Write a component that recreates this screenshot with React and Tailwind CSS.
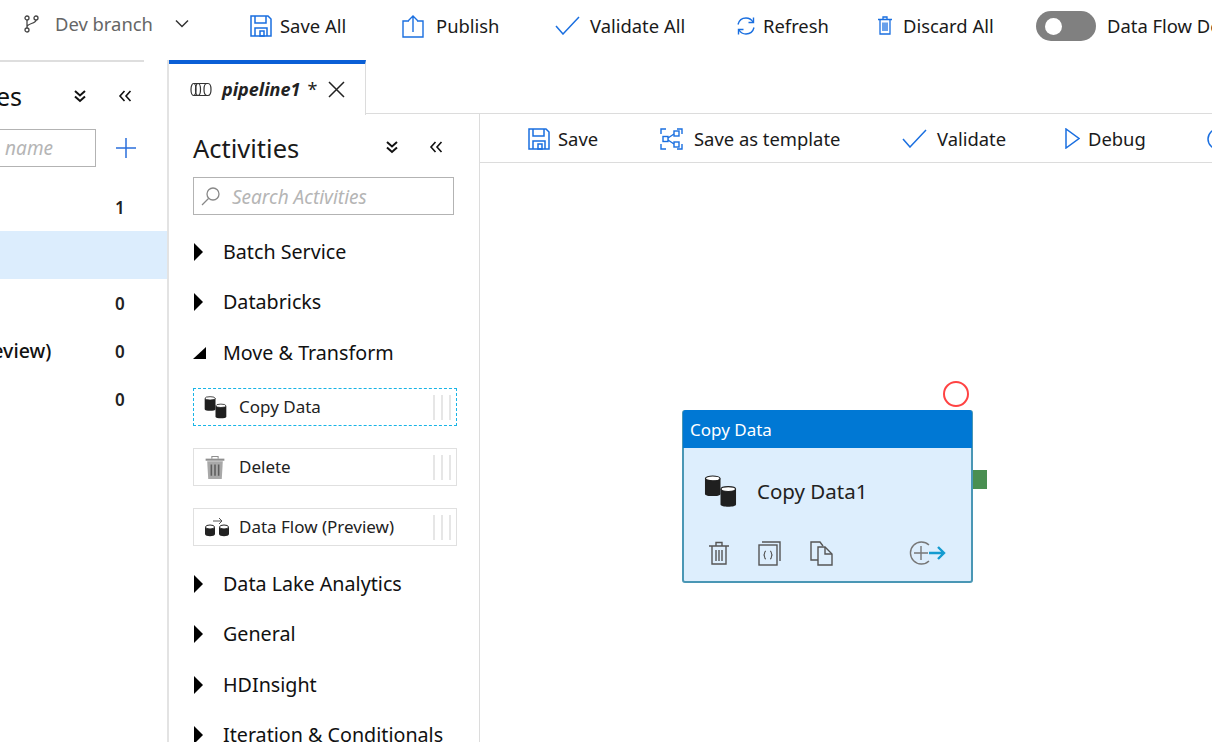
import React from "react";

const blue = "#1a6fe0";

const SaveIcon = ({ size = 22 }) => (
  <svg className="shrink-0" width={size} height={size} viewBox="0 0 22 22" fill="none" stroke={blue} strokeWidth="1.5">
    <path d="M1 1h17l3 3v17H1z" />
    <path d="M5 1v7h11V1M5 21v-8h12v8M10 16v5h4v-5z" />
  </svg>
);
const PublishIcon = () => (
  <svg className="shrink-0" width="22" height="24" viewBox="0 0 22 24" fill="none" stroke={blue} strokeWidth="1.4">
    <path d="M7 7H1v16h20V7h-6M11 18V2M6.500 6.500 11 2l4.500 4.500" />
  </svg>
);
const CheckIcon = ({ w = 25, h = 19 }) => (
  <svg className="shrink-0" width={w} height={h} viewBox="0 0 25 19" fill="none" stroke={blue} strokeWidth="1.5">
    <path d="M1 10l7 8L24 1" />
  </svg>
);
const RefreshIcon = () => (
  <svg className="shrink-0" width="20" height="20" viewBox="0 0 20 20" fill="none" stroke={blue} strokeWidth="1.4">
    <path d="M2 8.500C3 4.500 6 2 10 2c3 0 5.500 1.500 7 4M18 11.500C17 15.500 14 18 10 18c-3 0-5.500-1.500-7-4" />
    <path d="M17.500 1.500V6.500h-5M2.500 18.500V13.500h5" />
  </svg>
);
const DiscardIcon = () => (
  <svg className="shrink-0" width="14" height="19" viewBox="0 0 14 19" fill="none" stroke={blue} strokeWidth="1.3">
    <path d="M0 3.500h14M5 3.500V1h4v2.500M2 3.500V18h10V3.500M5 6.500V15M7 6.500V15M9 6.500V15" />
  </svg>
);
const BranchIcon = () => (
  <svg className="shrink-0" width="15" height="18" viewBox="0 0 15 18" fill="none" stroke="#444" strokeWidth="1.3">
    <circle cx="3" cy="3" r="2" />
    <circle cx="12" cy="3" r="2" />
    <circle cx="3" cy="15" r="2" />
    <path d="M3 5v8M12 5c0 4-9 3-9 7" />
  </svg>
);
const DoubleDown = () => (
  <svg className="shrink-0" width="14" height="14" viewBox="0 0 14 14" fill="none" stroke="#111" strokeWidth="2">
    <path d="M2 2l5 4.500L12 2M2 7.500l5 4.500 5-4.500" />
  </svg>
);
const DoubleLeft = () => (
  <svg className="shrink-0" width="14" height="14" viewBox="0 0 14 14" fill="none" stroke="#111" strokeWidth="1.600">
    <path d="M6.500 2 2 7l4.500 5M12.500 2 8 7l4.500 5" />
  </svg>
);
const Db = ({ x, y, w = 13, h = 18 }) => (
  <g>
    <path d={`M${x} ${y + 3}v${h - 5}c0 3 ${w} 3 ${w} 0v-${h - 5}z`} fill="#1f1f1f" />
    <ellipse cx={x + w / 2} cy={y + 3} rx={w / 2 - 0.5} ry="2.500" fill="#fff" stroke="#1f1f1f" strokeWidth="1.200" />
  </g>
);
const CopyIcon = ({ size = 24 }) => (
  <svg className="shrink-0" width={size} height={size} viewBox="0 0 34 33" fill="none">
    <Db x={1} y={0} w={16} h={21} />
    <Db x={17} y={11} w={16} h={21} />
  </svg>
);
const TrashGray = () => (
  <svg className="shrink-0" width="22" height="25" viewBox="0 0 20 24">
    <path d="M1 3.500h18v2H1z" fill="#8f8f8f" />
    <path d="M7 3.500V1.500h6v2" fill="none" stroke="#8f8f8f" />
    <path d="M2.500 6h15l-1 17h-13z" fill="#a8a8a8" />
    <path d="M6.500 9v11M10 9v11M13.500 9v11" stroke="#5e5e5e" strokeWidth="1.500" />
  </svg>
);
const FlowIcon = () => (
  <svg className="shrink-0" width="26" height="22" viewBox="0 0 26 22" fill="none">
    <path d="M9 5h9M15 2l3 3-3 3" stroke="#555" strokeWidth="1" />
    <path d="M1 11v7c0 3 10 3 10 0v-7z" fill="#222" />
    <ellipse cx="6" cy="11" rx="4.500" ry="2" fill="#fff" stroke="#222" />
    <path d="M15 11v7c0 3 10 3 10 0v-7z" fill="#222" />
    <ellipse cx="20" cy="11" rx="4.500" ry="2" fill="#fff" stroke="#222" />
  </svg>
);
const Grip = () => (
  <div className="flex gap-[6px] h-[25px] mr-[5px]">
    <div className="w-[2px] bg-[#e6e6e6]" />
    <div className="w-[2px] bg-[#e6e6e6]" />
    <div className="w-[2px] bg-[#e6e6e6]" />
  </div>
);
const Closed = () => (
  <svg width="11" height="18" viewBox="0 0 11 18"><path d="M1 0l9 9-9 9z" fill="#000" /></svg>
);
const Opened = () => (
  <svg width="13" height="12" viewBox="0 0 13 12"><path d="M13 0v12H0z" fill="#000" /></svg>
);

const Cat = ({ children, cls, open }) => (
  <div className={`flex items-center text-[#111] text-[19.700px] ${cls}`}>
    <div className="w-[30px] flex items-center">{open ? <Opened /> : <Closed />}</div>
    <span className="whitespace-nowrap">{children}</span>
  </div>
);
const Item = ({ icon, children, cls }) => (
  <div className={`flex items-center h-[38px] w-[264px] text-[17px] text-[#222] ${cls}`}>
    <div className="w-[45px] pl-[10px] flex items-center shrink-0">{icon}</div>
    <span className="grow whitespace-nowrap">{children}</span>
    <Grip />
  </div>
);
const Tool = ({ icon, children, cls, gap = "gap-[8px]" }) => (
  <div className={`flex items-center whitespace-nowrap shrink-0 ${gap} ${cls}`}>
    {icon}
    <span>{children}</span>
  </div>
);
const Row = ({ label, n }) => (
  <div className="h-[48px] flex items-center shrink-0">
    <span className="whitespace-nowrap text-[#111] font-medium text-[19.500px] w-[191px] -ml-[140px] shrink-0">{label}</span>
    <span className="ml-[64px] w-[10px] mt-[1px] text-[17px] font-semibold text-[#222] shrink-0">{n}</span>
  </div>
);

export default function App() {
  return (
    <div
      className="w-[1212px] h-[742px] overflow-hidden bg-white flex flex-col text-[#111]"
      style={{ fontFamily: '"Noto Sans", "Open Sans", sans-serif' }}
    >
      <div className="h-[60px] shrink-0 flex items-center pl-[24px] pb-[8px] text-[18.400px] text-[#1a1a1a] overflow-hidden">
        <div className="w-[226px] flex items-center -mt-[4px] shrink-0 text-[#666]">
          <div className="w-[31px]"><BranchIcon /></div>
          <span className="w-[119px] whitespace-nowrap">Dev branch</span>
          <svg width="16" height="10" viewBox="0 0 16 10" fill="none" stroke="#333" strokeWidth="1.500"><path d="M2 1.500l6 6 6-6" /></svg>
        </div>
        <Tool icon={<SaveIcon />} cls="w-[152px]">Save All</Tool>
        <Tool icon={<PublishIcon />} cls="w-[153px]" gap="gap-[12px]">Publish</Tool>
        <Tool icon={<CheckIcon />} cls="w-[181px]" gap="gap-[10px]">Validate All</Tool>
        <Tool icon={<RefreshIcon />} cls="w-[142px]" gap="gap-[7px]">Refresh</Tool>
        <Tool icon={<DiscardIcon />} cls="w-[158px]" gap="gap-[11px]">Discard All</Tool>
        <div className="w-[60px] h-[30px] rounded-full bg-[#808080] flex items-center pl-[9px] shrink-0">
          <div className="w-[17px] h-[17px] rounded-full bg-white" />
        </div>
        <span className="ml-[11px] whitespace-nowrap">Data Flow Debug</span>
      </div>

      <div className="flex grow min-h-0">
        <div className="w-[169px] shrink-0 border-r-2 border-[#e3e3e3] overflow-hidden flex flex-col">
          <div className="h-[2px] w-[144px] bg-[#dedede] shrink-0" />
          <div className="h-[67px] shrink-0 flex items-center justify-end pr-[35px]">
            <span className="whitespace-nowrap text-[25px] mr-[51px] mt-[3px] shrink-0">Factory Resources</span>
            <div className="w-[14px] mr-[31px] shrink-0"><DoubleDown /></div>
            <DoubleLeft />
          </div>
          <div className="flex items-center justify-end h-[38px] shrink-0 pr-[31px]">
            <div className="w-[130px] h-[38px] border border-[#b3b3b3] flex items-center justify-end pr-[42px] mr-[20px] shrink-0">
              <span className="italic text-[#b5b5b5] text-[19px] whitespace-nowrap">name</span>
            </div>
            <svg className="shrink-0" width="20" height="20" viewBox="0 0 20 20" stroke="#2a6fdb" strokeWidth="1.500"><path d="M10 0v20M0 10h20" /></svg>
          </div>
          <div className="h-[16px] shrink-0" />
          <Row label="Pipelines" n="1" />
          <div className="h-[48px] bg-[#dcedfd] shrink-0" />
          <Row label="Datasets" n="0" />
          <Row label="Data Flows (Preview)" n="0" />
          <Row label="Templates" n="0" />
        </div>

        <div className="grow min-w-0 flex flex-col">
          <div className="h-[54px] shrink-0 flex">
            <div className="w-[197px] h-[55px] bg-white border-t-4 border-t-[#0a5fd6] border-r border-[#dcdcdc] flex items-center pl-[21px] relative z-10">
              <svg className="shrink-0" width="22" height="15" viewBox="0 0 22 15" fill="none" stroke="#333" strokeWidth="1.200">
                <ellipse cx="3.500" cy="7.500" rx="2.500" ry="6" />
                <ellipse cx="8" cy="7.500" rx="2.500" ry="6" />
                <path d="M4 1.500h14c2 0 3 3 3 6s-1 6-3 6H4" />
                <path d="M17 1.500c-2 0-3 3-3 6s1 6 3 6" />
              </svg>
              <span className="ml-[10px] font-bold italic text-[18px] text-[#222] whitespace-nowrap">pipeline1</span>
              <span className="ml-[7px] text-[18px] text-[#222]">*</span>
              <svg className="ml-[11px] shrink-0" width="17" height="17" viewBox="0 0 17 17" stroke="#222" strokeWidth="1.500"><path d="M1 1l15 15M16 1 1 16" /></svg>
            </div>
            <div className="grow border-b border-[#dcdcdc]" />
          </div>
          <div className="grow min-h-0 flex">
            <div className="w-[311px] shrink-0 border-r border-[#dcdcdc] pl-[24px] overflow-hidden">
              <div className="h-[63px] flex items-center">
                <span className="text-[25.500px] w-[192px] text-[#1a1a1a] mt-[6px] shrink-0">Activities</span>
                <div className="mt-[2px] flex items-center">
                  <DoubleDown />
                  <div className="ml-[30px]"><DoubleLeft /></div>
                </div>
              </div>
              <div className="w-[261px] h-[38px] border border-[#b3b3b3] flex items-center pl-[7px]">
                <svg className="shrink-0" width="20" height="20" viewBox="0 0 20 20" fill="none" stroke="#888" strokeWidth="1.300">
                  <circle cx="12" cy="8" r="6" /><path d="M7.500 12.500 1 19" />
                </svg>
                <span className="ml-[11px] italic text-[#b5b5b5] text-[19px] whitespace-nowrap mt-[2px]">Search Activities</span>
              </div>
              <Cat cls="mt-[21px] h-[32px]">Batch Service</Cat>
              <Cat cls="mt-[18px] h-[32px]">Databricks</Cat>
              <Cat cls="mt-[19px] h-[32px]" open>Move &amp; Transform</Cat>
              <Item cls="mt-[19px] border border-dashed border-[#18b4e6]" icon={<CopyIcon size={23} />}>Copy Data</Item>
              <Item cls="mt-[22px] border border-[#e0e0e0]" icon={<TrashGray />}>Delete</Item>
              <Item cls="mt-[22px] border border-[#e0e0e0]" icon={<FlowIcon />}>Data Flow (Preview)</Item>
              <Cat cls="mt-[22px] h-[32px]">Data Lake Analytics</Cat>
              <Cat cls="mt-[18px] h-[32px]">General</Cat>
              <Cat cls="mt-[19px] h-[32px]">HDInsight</Cat>
              <Cat cls="mt-[18px] h-[32px]">Iteration &amp; Conditionals</Cat>
            </div>

            <div className="grow min-w-0 flex flex-col">
              <div className="h-[49px] shrink-0 border-b border-[#dcdcdc] flex items-center pl-[48px] pt-[2px] text-[18.400px] text-[#1a1a1a] overflow-hidden">
                <Tool icon={<SaveIcon />} cls="w-[132px]">Save</Tool>
                <Tool
                  cls="w-[242px]"
                  gap="gap-[11px]"
                  icon={
                    <svg className="shrink-0" width="23" height="22" viewBox="0 0 23 22" fill="none" stroke={blue} strokeWidth="1.400">
                      <path d="M1 6V1h5M17 1h5v5M22 16v5h-5M6 21H1v-5" />
                      <rect x="3" y="8.500" width="5" height="5" />
                      <rect x="14" y="3" width="5" height="5" />
                      <rect x="14" y="14" width="5" height="5" />
                      <path d="M8 10l6-4M8 12l6 4" />
                    </svg>
                  }
                >
                  Save as template
                </Tool>
                <Tool icon={<CheckIcon />} cls="w-[163px]" gap="gap-[10px]">Validate</Tool>
                <Tool
                  cls="w-[142px]"
                  icon={
                    <svg className="shrink-0" width="15" height="21" viewBox="0 0 15 21" fill="none" stroke={blue} strokeWidth="1.500"><path d="M1 1v19l13-9.500z" /></svg>
                  }
                >
                  Debug
                </Tool>
                <svg className="shrink-0" width="22" height="22" viewBox="0 0 22 22" fill="none" stroke={blue} strokeWidth="1.500"><circle cx="11" cy="11" r="10" /></svg>
              </div>

              <div className="grow relative overflow-hidden">
                <div className="absolute left-[202px] top-[247px] w-[291px] h-[173px] rounded-[3px] border-2 border-[#4a97b5] bg-[#ddeefd] flex flex-col">
                  <div className="h-[38px] -mt-[2px] -mx-[1px] rounded-t-[3px] bg-[#0078d4] text-white text-[17px] flex items-center pl-[7px] pt-[2px] shrink-0">Copy Data</div>
                  <div className="h-[87px] flex items-center pl-[20px] shrink-0">
                    <CopyIcon size={33} />
                    <span className="ml-[20px] text-[20.500px] text-[#222] whitespace-nowrap">Copy Data1</span>
                  </div>
                  <div className="flex items-center pl-[25px] mt-[5px] text-[#555]">
                    <svg className="shrink-0" width="20" height="25" viewBox="0 0 20 25" fill="none" stroke="#555" strokeWidth="1.400">
                      <path d="M0 5h20M7 5V1.500h6V5M3 5v18h14V5M7 9v11M10 9v11M13 9v11" />
                    </svg>
                    <svg className="ml-[29px] shrink-0" width="23" height="25" viewBox="0 0 23 25" fill="none" stroke="#555" strokeWidth="1.400">
                      <path d="M4 1h18v19" /><rect x="1" y="4" width="18" height="20" />
                      <path d="M8 10c-2 0-1 3-2 4 1 1 0 4 2 4M12 10c2 0 1 3 2 4-1 1 0 4-2 4" strokeWidth="1.100" />
                    </svg>
                    <svg className="ml-[29px] shrink-0" width="23" height="25" viewBox="0 0 23 25" fill="none" stroke="#555" strokeWidth="1.400">
                      <path d="M8 19H1V1h9l3 4" /><path d="M8 6h7l7 7v11H8z" /><path d="M15 6v7h7" />
                    </svg>
                    <svg className="ml-[75px] shrink-0" width="38" height="26" viewBox="0 0 38 26" fill="none">
                      <path d="M21 5a11 11 0 1 0 0 16" stroke="#777" strokeWidth="1.400" />
                      <path d="M6 13h14M13 6v14" stroke="#777" strokeWidth="1.400" />
                      <path d="M21 13h15M30 7l6 6-6 6" stroke="#149bd0" strokeWidth="2.400" />
                    </svg>
                  </div>
                  <div className="absolute -right-[16px] top-[58px] w-[14px] h-[19px] bg-[#4a8f52]" />
                  <div className="absolute right-[2px] -top-[31px] w-[26px] h-[26px] rounded-full border-2 border-[#ff4343]" />
                </div>
              </div>
            </div>
          </div>
        </div>
      </div>
    </div>
  );
}
